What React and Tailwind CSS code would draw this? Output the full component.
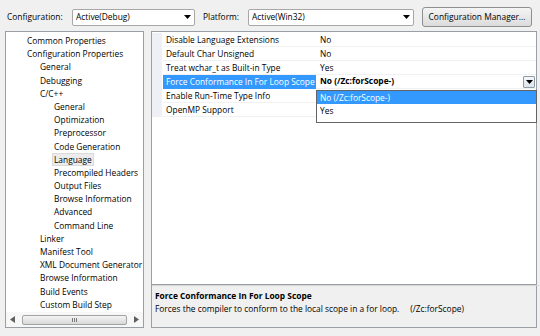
import React from 'react';

const treeItems = [
  { label: 'Common Properties', level: 0 },
  { label: 'Configuration Properties', level: 0 },
  { label: 'General', level: 1 },
  { label: 'Debugging', level: 1 },
  { label: 'C/C++', level: 1 },
  { label: 'General', level: 2 },
  { label: 'Optimization', level: 2 },
  { label: 'Preprocessor', level: 2 },
  { label: 'Code Generation', level: 2 },
  { label: 'Language', level: 2, selected: true },
  { label: 'Precompiled Headers', level: 2 },
  { label: 'Output Files', level: 2 },
  { label: 'Browse Information', level: 2 },
  { label: 'Advanced', level: 2 },
  { label: 'Command Line', level: 2 },
  { label: 'Linker', level: 1 },
  { label: 'Manifest Tool', level: 1 },
  { label: 'XML Document Generator', level: 1 },
  { label: 'Browse Information', level: 1 },
  { label: 'Build Events', level: 1 },
  { label: 'Custom Build Step', level: 1 },
];

// values of the last two rows sit under the open dropdown list
const properties = [
  { name: 'Disable Language Extensions', value: 'No' },
  { name: 'Default Char Unsigned', value: 'No' },
  { name: 'Treat wchar_t as Built-in Type', value: 'Yes' },
  { name: 'Force Conformance In For Loop Scope', value: 'No (/Zc:forScope-)', active: true },
  { name: 'Enable Run-Time Type Info', value: '' },
  { name: 'OpenMP Support', value: '' },
];

// indent per tree level
const indents = ['pl-[21px]', 'pl-[34px]', 'pl-[48px]'];

function DownArrow({ className = '' }) {
  return (
    <svg width="7" height="4" viewBox="0 0 7 4" className={className}>
      <path d="M0 0 H7 L3.5 4 Z" fill="#000" />
    </svg>
  );
}

function ComboBox({ value, className = '' }) {
  return (
    <div className={`flex items-center h-[17px] bg-white border border-[#a7a7a7] rounded-[2px] pl-[3px] pr-[3px] ${className}`}>
      <span className="flex-1 truncate">{value}</span>
      <DownArrow />
    </div>
  );
}

function TreePanel() {
  return (
    <div className="w-[139px] h-[297px] bg-white border border-[#9a9fa6] flex flex-col">
      <div className="flex-1 pt-[2px]">
        {treeItems.map((item, i) => (
          <div key={i} className={`h-[13.2px] leading-[13.2px] whitespace-nowrap ${indents[item.level]}`}>
            {item.selected ? (
              <span className="inline-block leading-[11px] px-[1px] -ml-[2px] bg-[#ececec] border border-[#dadada]">
                {item.label}
              </span>
            ) : (
              item.label
            )}
          </div>
        ))}
      </div>
      {/* horizontal scroll bar */}
      <div className="h-[15px] flex items-center bg-[#f7f7f7] px-[4px] gap-[4px]">
        <svg width="5" height="7" viewBox="0 0 5 7">
          <path d="M5 0 V7 L0 3.5 Z" fill="#606060" />
        </svg>
        <div className="flex-1 h-[10px] mx-[3px] rounded-[2px] border border-[#a2a2a2] bg-gradient-to-b from-[#f4f4f4] to-[#d9d9d9] flex items-center justify-center">
          <div className="flex gap-[1px]">
            <div className="w-[1px] h-[4px] bg-[#7a7a7a]" />
            <div className="w-[1px] h-[4px] bg-[#7a7a7a]" />
            <div className="w-[1px] h-[4px] bg-[#7a7a7a]" />
          </div>
        </div>
        <svg width="5" height="7" viewBox="0 0 5 7">
          <path d="M0 0 V7 L5 3.5 Z" fill="#606060" />
        </svg>
      </div>
    </div>
  );
}

function PropertyGrid() {
  return (
    <div className="relative h-[254px] bg-white border border-[#9a9fa6] pt-[1px]">
      {properties.map((p, i) => (
        <div key={i} className="flex h-[14px]">
          <div className="w-[10px] bg-[#eef0f6] mr-[1px]" />
          <div
            className={`w-[153px] pl-[3px] leading-[13px] whitespace-nowrap border-b ${
              p.active ? 'bg-[#3399ff] text-white border-[#3399ff]' : 'border-[#f1f1f1]'
            }`}
          >
            {p.name}
          </div>
          <div className="flex-1 flex items-center pl-[4px] pr-[1px] border-b border-[#f1f1f1] whitespace-nowrap">
            {p.active ? (
              <>
                <span className="flex-1 font-bold">{p.value}</span>
                <div className="w-[12px] h-[12px] flex items-center justify-center border border-[#8d9aa8] bg-gradient-to-b from-[#f5f7fa] to-[#dfe4ea] rounded-[1px]">
                  <DownArrow />
                </div>
              </>
            ) : (
              <span className="leading-[13px]">{p.value}</span>
            )}
          </div>
        </div>
      ))}

      {/* open dropdown list */}
      <div className="absolute left-[164px] top-[58px] w-[221px] h-[33px] bg-white border border-[#646464]">
        <div className="h-[13px] leading-[13px] pl-[3px] bg-[#3399ff] text-white">No (/Zc:forScope-)</div>
        <div className="h-[14px] leading-[14px] pl-[3px]">Yes</div>
      </div>
    </div>
  );
}

export default function App() {
  return (
    <div className="w-[540px] h-[336px] bg-[#f0f0f0] text-black text-[8.4px] font-['Open_Sans',sans-serif] overflow-hidden">
      {/* toolbar */}
      <div className="flex items-center h-[20px] mt-[7px] mb-[4px] pl-[7px]">
        <span className="w-[65px]">Configuration:</span>
        <ComboBox value="Active(Debug)" className="w-[123px]" />
        <span className="w-[45px] ml-[8px]">Platform:</span>
        <ComboBox value="Active(Win32)" className="w-[166px]" />
        <button className="ml-[8px] w-[110px] h-[20px] border border-[#8e8f8f] rounded-[3px] bg-gradient-to-b from-[#f4f4f4] to-[#dcdcdc]">
          Configuration Manager...
        </button>
      </div>

      {/* body */}
      <div className="flex pl-[5px] gap-[7px]">
        <TreePanel />
        <div className="w-[386px] flex flex-col">
          <PropertyGrid />
          <div className="h-[43px] border border-t-0 border-[#9a9fa6] bg-[#f0f0f0] pl-[3px] pt-[4px] leading-[13px]">
            <div className="h-[1px] -mx-[3px] -mt-[4px] mb-[3px] bg-[#d5d5d5]" />
            <div className="font-bold">Force Conformance In For Loop Scope</div>
            <div className="whitespace-pre">Forces the compiler to conform to the local scope in a for loop.     (/Zc:forScope)</div>
          </div>
        </div>
      </div>
    </div>
  );
}
